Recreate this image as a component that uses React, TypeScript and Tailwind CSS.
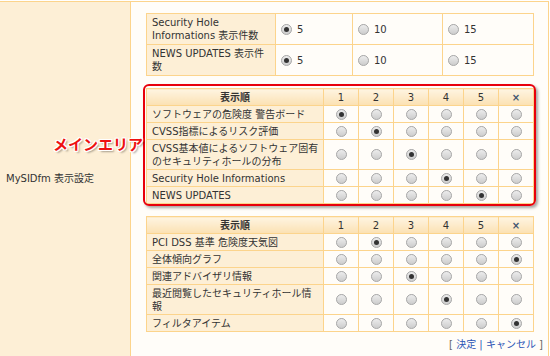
import React from "react";

const B = "border border-[#fcd48c]";

function Radio({ checked }: { checked?: boolean }) {
  return (
    <span className="inline-flex w-[11px] h-[11px] rounded-full border border-[#a8a8a8] bg-gradient-to-b from-[#ececec] to-[#cdcdcd] items-center justify-center align-middle shrink-0">
      {checked && <span className="block w-[5px] h-[5px] rounded-full bg-[#333]" />}
    </span>
  );
}

function Table1() {
  const rows = [
    ["Security Hole", "Informations 表示件数"],
    ["NEWS UPDATES 表示件", "数"],
  ];
  return (
    <table className="border-collapse w-[387px] table-fixed">
      <colgroup>
        <col className="w-[129px]" />
        <col className="w-[77px]" />
        <col className="w-[90px]" />
        <col className="w-[91px]" />
      </colgroup>
      <tbody>
        {rows.map((r, i) => (
          <tr key={i} className="h-[31px]">
            <td className={`${B} bg-[#fdefd6] px-[5px] py-0 align-middle whitespace-nowrap`}>
              <div className="leading-[13px] h-[26px] overflow-hidden">
                {r[0]}
                <br />
                {r[1]}
              </div>
            </td>
            {["5", "10", "15"].map((v, j) => (
              <td key={v} className={`${B} bg-[#fffdf9] pl-[5px] py-0 align-middle`}>
                <span className="flex items-center gap-[5px] h-[13px]">
                  <Radio checked={j === 0} />
                  <span>{v}</span>
                </span>
              </td>
            ))}
          </tr>
        ))}
      </tbody>
    </table>
  );
}

function OrderTable({ rows }: { rows: { label: React.ReactNode; sel: number; tall?: boolean }[] }) {
  const heads = ["1", "2", "3", "4", "5"];
  const th = `${B} bg-gradient-to-b from-[#fef4e1] to-[#fbe1b2] text-center p-0`;
  return (
    <table className="border-collapse w-[387px] table-fixed">
      <colgroup>
        <col className="w-[177px]" />
        <col className="w-[35px]" />
        <col className="w-[35px]" />
        <col className="w-[35px]" />
        <col className="w-[35px]" />
        <col className="w-[35px]" />
        <col className="w-[35px]" />
      </colgroup>
      <thead>
        <tr className="h-[17px]">
          <th className={`${th} font-bold`}>
            <div className="h-[13px] leading-[13px] overflow-hidden">表示順</div>
          </th>
          {heads.map((h) => (
            <th key={h} className={`${th} font-normal`}>
              <div className="h-[13px] leading-[13px]">{h}</div>
            </th>
          ))}
          <th className={`${th} font-bold text-[#3f5670]`}>
            <div className="h-[13px] leading-[13px]">×</div>
          </th>
        </tr>
      </thead>
      <tbody>
        {rows.map((r, i) => (
          <tr key={i} className={r.tall ? "h-[30px]" : "h-[17px]"}>
            <td className={`${B} bg-[#fdefd6] px-[5px] py-0 align-middle whitespace-nowrap`}>
              <div className={`leading-[13px] overflow-hidden ${r.tall ? "h-[26px]" : "h-[13px]"}`}>{r.label}</div>
            </td>
            {[0, 1, 2, 3, 4, 5].map((c) => (
              <td key={c} className={`${B} bg-[#fffdf9] align-middle p-0`}>
                <div className="flex justify-center items-center h-[13px]">
                  <Radio checked={r.sel === c} />
                </div>
              </td>
            ))}
          </tr>
        ))}
      </tbody>
    </table>
  );
}

export default function App() {
  return (
    <div
      className="relative w-[550px] h-[356px] overflow-hidden bg-white text-[10px] leading-[13px] text-[#333]"
      style={{ fontFamily: '"DejaVu Sans", "Noto Sans CJK JP", sans-serif' }}
    >
      <div className="mt-px flex w-[549px] h-[355px] border-t border-r border-[#fcd48c]">
        <div className="w-[131px] shrink-0 bg-[#fdefd6] border-r border-[#fcd48c] flex items-center pl-[6px] pb-[1px]">
          MySIDfm 表示設定
        </div>
        <div className="flex-1 bg-[#fffdf9] pl-[15px] pt-[11px] flex flex-col">
          <Table1 />
          <div className="relative mt-[12px]">
            <OrderTable
              rows={[
                { label: "ソフトウェアの危険度 警告ボード", sel: 0 },
                { label: "CVSS指標によるリスク評価", sel: 1 },
                {
                  label: (
                    <>
                      CVSS基本値によるソフトウェア固有
                      <br />
                      のセキュリティホールの分布
                    </>
                  ),
                  sel: 2,
                  tall: true,
                },
                { label: "Security Hole Informations", sel: 3 },
                { label: "NEWS UPDATES", sel: 4 },
              ]}
            />
            <div className="absolute left-[-3px] top-[-4px] w-[393px] h-[122px] border-2 border-[#e8000b] rounded-[6px] shadow-[2px_2px_3px_rgba(0,0,0,0.35)] pointer-events-none" />
          </div>
          <div className="mt-[12px]">
            <OrderTable
              rows={[
                { label: "PCI DSS 基準 危険度天気図", sel: 1 },
                { label: "全体傾向グラフ", sel: 5 },
                { label: "関連アドバイザリ情報", sel: 2 },
                {
                  label: (
                    <>
                      最近閲覧したセキュリティホール情
                      <br />
                      報
                    </>
                  ),
                  sel: 3,
                  tall: true,
                },
                { label: "フィルタアイテム", sel: 5 },
              ]}
            />
          </div>
          <div className="mt-[6px] w-[397px] text-right text-[#666] whitespace-nowrap">
            [ <span className="text-[#2a54b5]">決定</span> <span className="text-[#2a54b5]">|</span>{" "}
            <span className="text-[#2a54b5]">キャンセル</span> ]
          </div>
        </div>
      </div>
      <div
        className="absolute left-[53px] top-[134px] text-[15px] leading-[20px] font-bold text-[#ee1111]"
        style={{
          fontFamily: '"Noto Sans CJK JP", sans-serif',
          textShadow:
            "1px 0 #fff, -1px 0 #fff, 0 1px #fff, 0 -1px #fff, 1px 1px #fff, -1px -1px #fff, 1px -1px #fff, -1px 1px #fff, 2px 2px 2px rgba(0,0,0,0.35)",
        }}
      >
        メインエリア
      </div>
    </div>
  );
}
